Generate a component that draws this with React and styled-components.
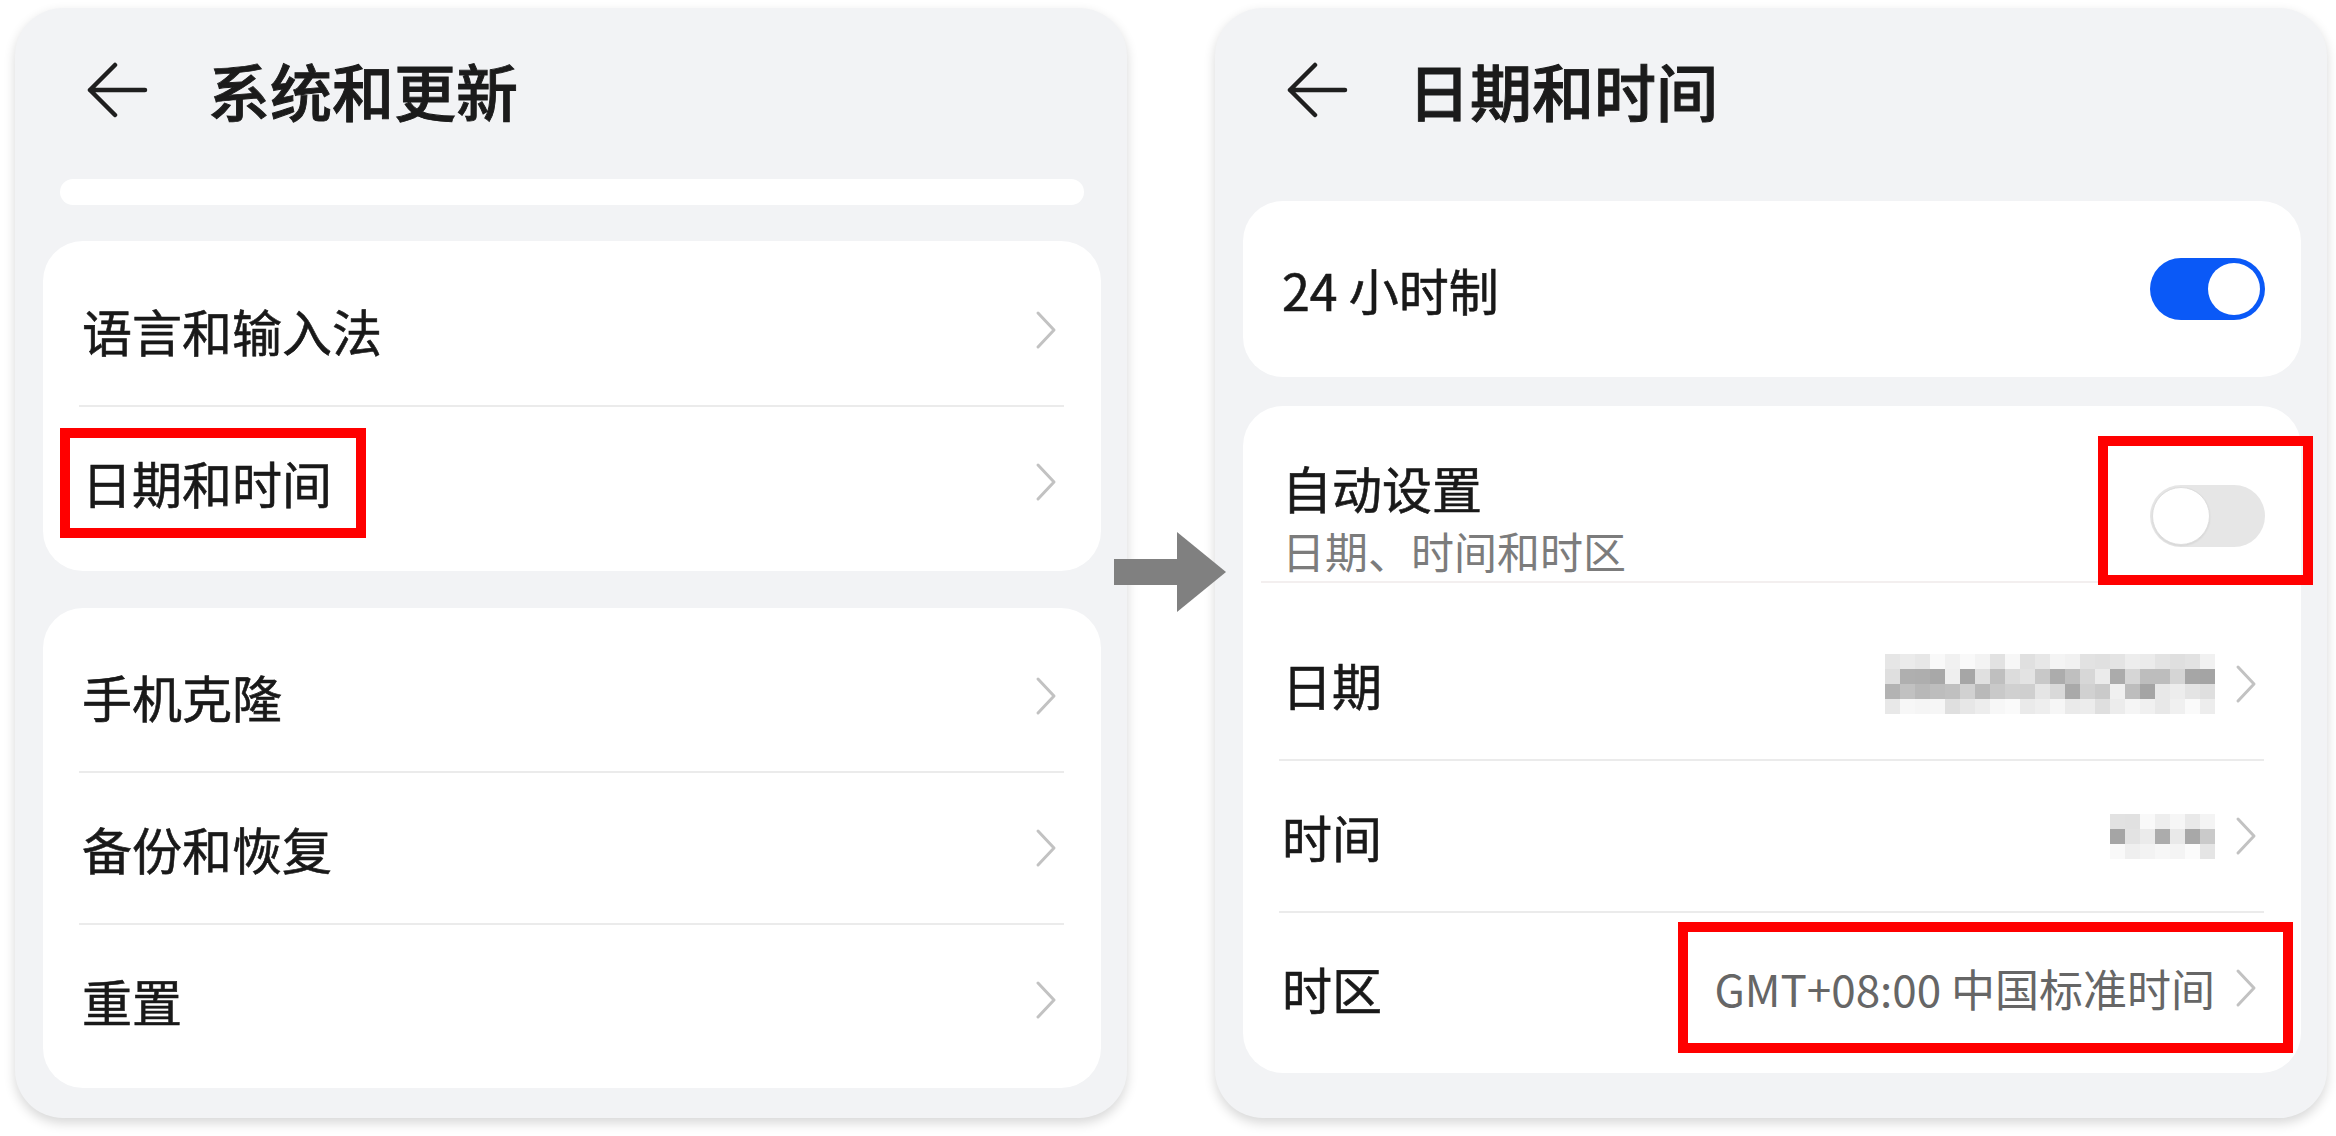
import React from "react";
import styled, { createGlobalStyle } from "styled-components";

const GlobalStyle = createGlobalStyle`
  html, body {
    margin: 0;
    background: #ffffff;
  }
  body {
    font-family: "Noto Sans CJK SC", "Noto Sans", sans-serif;
    color: #191919;
  }
`;

const Page = styled.div`
  display: flex;
  width: 2336px;
  height: 1136px;
  padding: 8px 0 0 15px;
  box-sizing: border-box;
`;

const Panel = styled.section`
  width: 1112px;
  height: 1110px;
  box-sizing: border-box;
  padding: 0 26px 0 28px;
  background: #f2f3f5;
  border-radius: 48px;
  box-shadow: 0 5px 12px rgba(0, 0, 0, 0.16);
  display: flex;
  flex-direction: column;
  overflow: hidden;
`;

const Connector = styled.div`
  width: 88px;
  display: flex;
  align-items: center;
  position: relative;
  z-index: 2;

  svg {
    flex: none;
    margin-left: -13px;
  }
`;

const Header = styled.header`
  height: 164px;
  flex: none;
  display: flex;
  align-items: center;
  gap: 60px;
  padding-left: 43px;
`;

const Title = styled.h1`
  margin: 0;
  font-size: 62px;
  font-weight: 500;
  line-height: 1;
  color: #1b1b1b;
  -webkit-text-stroke: 0.9px #1b1b1b;
`;

const Strip = styled.div`
  height: 26px;
  margin: 7px 17px 0;
  background: #ffffff;
  border-radius: 13px;
  flex: none;
`;

const Card = styled.div`
  background: #ffffff;
  border-radius: 40px;
  margin-top: ${(p) => p.$gap}px;
  padding: ${(p) => p.$pad || "0"};
  flex: none;
`;

const Row = styled.div`
  height: ${(p) => p.$h || 150}px;
  display: flex;
  align-items: center;
  justify-content: space-between;
  padding: 0 44px 0 39px;
  box-sizing: border-box;
`;

const AutoRow = styled(Row)`
  height: auto;
  padding-top: 52px;
  padding-bottom: 8px;
`;

const Divider = styled.div`
  height: 2px;
  background: #ebebeb;
  margin: 0 37px 0 36px;
`;

const WideDivider = styled.div`
  height: 2px;
  background: #f3efef;
  margin: 0 4px 26px 18px;
`;

const Label = styled.div`
  font-size: 50px;
  line-height: 59px;
  color: #191919;
  -webkit-text-stroke: 0.6px #191919;
`;

const TextCol = styled.div`
  display: flex;
  flex-direction: column;
`;

const Sub = styled.div`
  margin-top: 10px;
  font-size: 43px;
  line-height: 46px;
  color: #7c7c7c;
`;

const Trailing = styled.div`
  display: flex;
  align-items: center;
  gap: 20px;
`;

const Value = styled.span`
  font-size: 44px;
  line-height: 50px;
  color: #666666;
`;

const Highlight = styled.div`
  border: 10px solid #ff0000;
  padding: ${(p) => p.$pad};
  margin: ${(p) => p.$margin};
  display: flex;
  align-items: center;
  gap: 20px;
  position: relative;
  z-index: 1;
`;

const Track = styled.div`
  width: 115px;
  height: 62px;
  border-radius: 31px;
  box-sizing: border-box;
  padding: ${(p) => (p.$on ? "5px" : "2px")};
  background: ${(p) => (p.$on ? "#0a59f7" : "#e6e6e6")};
  display: flex;
  justify-content: ${(p) => (p.$on ? "flex-end" : "flex-start")};
`;

const Knob = styled.div`
  width: ${(p) => (p.$on ? 52 : 58)}px;
  height: ${(p) => (p.$on ? 52 : 58)}px;
  box-sizing: border-box;
  border-radius: 50%;
  background: #ffffff;
  border: ${(p) => (p.$on ? "none" : "1px solid #dedede")};
  box-shadow: ${(p) => (p.$on ? "none" : "0 1px 2px rgba(0,0,0,0.08)")};
`;

const MosaicGrid = styled.div`
  display: grid;
  grid-template-columns: repeat(${(p) => p.$cols}, 15px);
  grid-auto-rows: 15px;
`;

const Cell = styled.div.attrs((p) => ({ style: { background: p.$c } }))``;

const BackArrow = () => (
  <svg width="62" height="56" viewBox="0 0 62 56" fill="none">
    <path
      d="M59 28H4M29 3L4 28L29 53"
      stroke="#1f1f1f"
      strokeWidth="4.5"
      strokeLinecap="round"
      strokeLinejoin="round"
    />
  </svg>
);

const Chevron = () => (
  <svg width="22" height="40" viewBox="0 0 22 40" fill="none">
    <path
      d="M3 3L19 20L3 37"
      stroke="#c2c2c2"
      strokeWidth="3"
      strokeLinecap="round"
      strokeLinejoin="round"
    />
  </svg>
);

const Toggle = ({ on }) => (
  <Track $on={on}>
    <Knob $on={on} />
  </Track>
);

// pixelated (blurred) value, like the reference's censored date / time
const Mosaic = ({ cols, rows, seed }) => {
  const rnd = (i) => {
    const x = Math.sin(i * 12.9898 + seed * 78.233) * 43758.5453;
    return x - Math.floor(x);
  };
  const cells = [];
  for (let r = 0; r < rows; r++) {
    for (let c = 0; c < cols; c++) {
      const edge = r === 0 || r === rows - 1;
      const n = rnd(r * cols + c);
      const v = Math.round(edge ? 222 + n * 30 : 160 + n * 80);
      cells.push(<Cell key={r * cols + c} $c={`rgb(${v},${v},${v})`} />);
    }
  }
  return <MosaicGrid $cols={cols}>{cells}</MosaicGrid>;
};

const LinkRow = ({ children, label }) => (
  <Row>
    {label}
    <Trailing>
      {children}
      <Chevron />
    </Trailing>
  </Row>
);

const App = () => (
  <>
    <GlobalStyle />
    <Page>
      <Panel>
        <Header>
          <BackArrow />
          <Title>系统和更新</Title>
        </Header>
        <Strip />
        <Card $gap={36} $pad="14px 0">
          <LinkRow label={<Label>语言和输入法</Label>} />
          <Divider />
          <LinkRow
            label={
              <Highlight $pad="15px 24px 16px 12px" $margin="-25px -34px -26px -22px">
                <Label>日期和时间</Label>
              </Highlight>
            }
          />
        </Card>
        <Card $gap={37} $pad="13px 0">
          <LinkRow label={<Label>手机克隆</Label>} />
          <Divider />
          <LinkRow label={<Label>备份和恢复</Label>} />
          <Divider />
          <LinkRow label={<Label>重置</Label>} />
        </Card>
      </Panel>

      <Connector>
        <svg width="112" height="80" viewBox="0 0 112 80">
          <rect x="0" y="27" width="64" height="26" fill="#808080" />
          <polygon points="63,0 112,40 63,80" fill="#808080" />
        </svg>
      </Connector>

      <Panel>
        <Header>
          <BackArrow />
          <Title>日期和时间</Title>
        </Header>
        <Card $gap={29}>
          <Row $h={176}>
            <Label>24 小时制</Label>
            <Trailing style={{ marginRight: -8 }}>
              <Toggle on />
            </Trailing>
          </Row>
        </Card>
        <Card $gap={29} $pad="0 0 10px">
          <AutoRow>
            <TextCol>
              <Label>自动设置</Label>
              <Sub>日期、时间和时区</Sub>
            </TextCol>
            <Highlight $pad="39px 38px 28px 42px" $margin="-49px -56px -38px -52px">
              <Toggle />
            </Highlight>
          </AutoRow>
          <WideDivider />
          <LinkRow label={<Label>日期</Label>}>
            <Mosaic cols={22} rows={4} seed={3} />
          </LinkRow>
          <Divider />
          <LinkRow label={<Label>时间</Label>}>
            <Mosaic cols={7} rows={3} seed={7} />
          </LinkRow>
          <Divider />
          <Row>
            <Label>时区</Label>
            <Highlight $pad="31px 26px 30px 26px" $margin="-41px -36px -40px -36px">
              <Value>GMT+08:00 中国标准时间</Value>
              <Chevron />
            </Highlight>
          </Row>
        </Card>
      </Panel>
    </Page>
  </>
);

export default App;
